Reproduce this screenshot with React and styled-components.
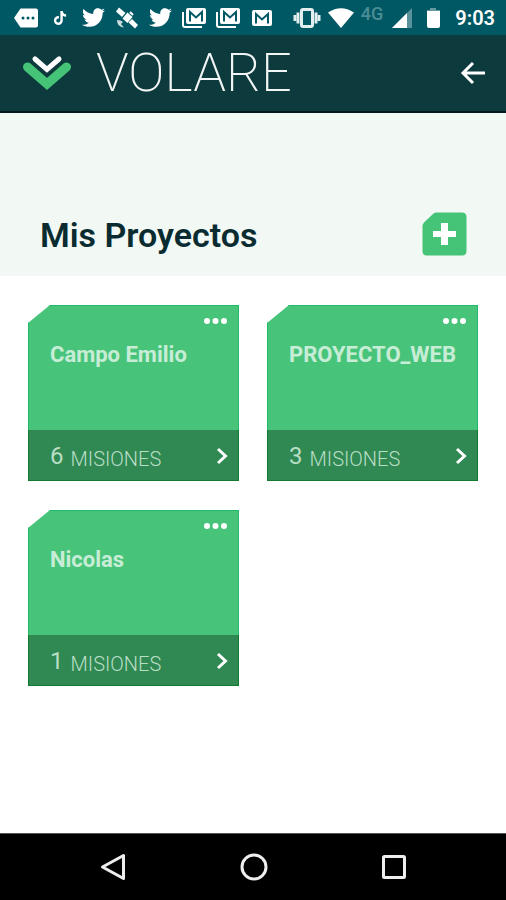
import styled, { createGlobalStyle } from "styled-components";
import { FaTwitter, FaTiktok } from "react-icons/fa";

const GlobalStyle = createGlobalStyle`
  * {
    box-sizing: border-box;
  }
  body {
    margin: 0;
    background: #fff;
    font-family: Roboto, sans-serif;
  }
  h1, h2, p {
    margin: 0;
  }
  button {
    border: none;
    background: none;
    padding: 0;
    cursor: pointer;
  }
  svg {
    display: block;
    flex-shrink: 0;
  }
`;

const StyledPage = styled.div`
  display: flex;
  flex-direction: column;
  min-height: 100vh;
`;

// Status bar
const StyledStatusBar = styled.div`
  display: flex;
  align-items: center;
  height: 35px;
  padding: 0 11px 0 14px;
  background: #005864;
  color: #fff;
`;
const StyledNotifications = styled.div`
  flex: 1;
  display: flex;
  justify-content: space-between;
`;
const StyledSystem = styled.div`
  display: flex;
  align-items: center;
  gap: 7px;
  margin-left: 19px;
`;
const StyledSlot = styled.div`
  display: flex;
  align-items: center;
  justify-content: center;
  width: ${(props) => props.$width || 24}px;
  height: 24px;
`;
const StyledNetwork = styled.span`
  align-self: flex-start;
  color: #4b8d95;
  font-size: 18px;
  font-weight: 500;
  line-height: 16px;
`;
const StyledTime = styled.time`
  margin-left: 3px;
  font-size: 20px;
  font-weight: 600;
  line-height: 24px;
`;
// Status bar end

// Header
const StyledHeader = styled.header`
  display: flex;
  align-items: center;
  height: 78px;
  padding: 0 20px 0 23px;
  border-bottom: 2px solid #021a1b;
  background: #0d3a3c;
`;
const StyledBrand = styled.a`
  display: flex;
  align-items: center;
  gap: 25px;
  color: #f2f5f5;
  text-decoration: none;
`;
const StyledBrandName = styled.span`
  font-size: 54px;
  font-weight: 200;
  line-height: 56px;
`;
const StyledBack = styled.button`
  margin-left: auto;
`;
// Header end

const StyledTitleBand = styled.div`
  display: flex;
  align-items: flex-end;
  justify-content: space-between;
  height: 163px;
  padding: 0 39px 20px 40px;
  background: #f2f8f3;
`;
const StyledTitle = styled.h1`
  color: #0a2c31;
  font-size: 34px;
  font-weight: 600;
  line-height: 42px;
`;

// Project cards
const StyledProjects = styled.main`
  flex: 1;
  display: grid;
  grid-template-columns: 1fr 1fr;
  align-content: start;
  gap: 29px 28px;
  padding: 29px 28px;
`;
const StyledCard = styled.article`
  display: flex;
  flex-direction: column;
  min-height: 176px;
  background: #48c47a;
  clip-path: polygon(22px 0, 100% 0, 100% 100%, 0 100%, 0 18px);
`;
const StyledCardBody = styled.div`
  flex: 1;
  display: flex;
  flex-direction: column;
  padding: 9px 12px 12px 22px;
  box-shadow: inset 1px 1px #1fbb6b, inset -1px 0 #1fbb6b;
`;
const StyledMenu = styled.button`
  align-self: flex-end;
`;
const StyledCardTitle = styled.h2`
  margin-top: 11px;
  color: #c8edd7;
  font-size: 22px;
  font-weight: 700;
  line-height: 32px;
`;
const StyledCardFooter = styled.a`
  display: flex;
  align-items: center;
  justify-content: space-between;
  height: 51px;
  padding: 0 10px 0 22px;
  background: #308852;
  box-shadow: inset 1px -1px #127a2c, inset -1px 0 #127a2c;
  color: #b9dec6;
  text-decoration: none;
`;
const StyledMissions = styled.p`
  display: flex;
  align-items: flex-end;
  gap: 7px;
`;
const StyledCount = styled.span`
  font-size: 24px;
  font-weight: 400;
  line-height: 28px;
`;
const StyledMissionsLabel = styled.span`
  font-size: 20px;
  font-weight: 300;
  line-height: 22px;
`;
// Project cards end

const StyledNavBar = styled.nav`
  display: flex;
  align-items: center;
  justify-content: space-between;
  height: 67px;
  padding: 0 98px 0 99px;
  border-top: 1px solid #555;
  background: #000;
`;

const projects = [
  { name: "Campo Emilio", missions: 6 },
  { name: "PROYECTO_WEB", missions: 3 },
  { name: "Nicolas", missions: 1 },
];

const TagIcon = () => (
  <svg width="24" height="20" viewBox="0 0 24 20">
    <path d="M6.500 0.500H22q2 0 2 2v15q0 2-2 2H6.500L0 10z" fill="#fff" />
    <circle cx="9" cy="10" r="1.500" fill="#005864" />
    <circle cx="14" cy="10" r="1.500" fill="#005864" />
    <circle cx="19" cy="10" r="1.500" fill="#005864" />
  </svg>
);

const SatelliteIcon = () => (
  <svg width="24" height="22" viewBox="0 0 24 22" fill="#fff">
    <path d="M4 0.500 10.500 6 7 10 1 4.500z" />
    <path d="M17 12 23 18 20 21.500 13.500 15.500z" />
    <path d="M12.500 5.500 17.500 10 12.500 16 7.500 11.500z" />
    <path d="M15 5 18 8" stroke="#fff" strokeWidth="2" />
    <path d="M2 13q0 7 7 7.500L6 17l2-2-2.500-1.500z" opacity="0.8" />
  </svg>
);

const MailIcon = ({ stacked }) => (
  <svg width="26" height="22" viewBox="0 0 26 22" fill="none">
    {stacked && (
      <path d="M2 5v13q0 2 2 2h17" stroke="#fff" strokeWidth="2" />
    )}
    <g transform={stacked ? "translate(4 0)" : "translate(2 2)"}>
      <rect x="1" y="1" width="20" height="16" rx="2" fill="#fff" />
      <path d="M5 14.500V5l6 5.500L17 5v9.500" stroke="#005864" strokeWidth="2" />
    </g>
  </svg>
);

const VibrateIcon = () => (
  <svg width="28" height="22" viewBox="0 0 28 22" fill="none" stroke="#e3eeef">
    <rect x="8.500" y="2.500" width="11" height="17" rx="1.500" strokeWidth="3" />
    <path d="M5 5.500v11M23 5.500v11" strokeWidth="3" />
    <path d="M2 8v6M26 8v6" strokeWidth="3" />
  </svg>
);

const WifiIcon = () => (
  <svg width="26" height="20" viewBox="0 0 26 20">
    <path d="M13 20 0 4.500Q13-4 26 4.500z" fill="#fff" />
  </svg>
);

const SignalIcon = () => (
  <svg width="24" height="20" viewBox="0 0 24 20">
    <path d="M22 0v20H2z" fill="#fff" opacity="0.35" />
    <path d="M17 5v15H2z" fill="#fff" />
  </svg>
);

const BatteryIcon = () => (
  <svg width="16" height="22" viewBox="0 0 16 22" fill="#fff">
    <path d="M5 1h6v2h4v3H2V3h3z" opacity="0.4" />
    <path d="M2 4h13v15q0 2-2 2H4q-2 0-2-2z" />
  </svg>
);

const VolareLogo = () => (
  <svg width="48" height="36" viewBox="0 0 48 36" fill="none">
    <path
      d="M4.500 12 24 29 43.500 12"
      stroke="#45c477"
      strokeWidth="9"
      strokeLinecap="round"
    />
    <path
      d="M12 4 24 14.500 36 4"
      stroke="#fff"
      strokeWidth="5"
      strokeLinecap="round"
    />
  </svg>
);

const ProjectCard = ({ name, missions }) => (
  <StyledCard>
    <StyledCardBody>
      <StyledMenu aria-label={`Opciones de ${name}`}>
        <svg width="24" height="14" viewBox="0 0 24 14" fill="#fff">
          <circle cx="4" cy="7" r="3" />
          <circle cx="12.500" cy="7" r="3" />
          <circle cx="21" cy="7" r="3" />
        </svg>
      </StyledMenu>
      <StyledCardTitle>{name}</StyledCardTitle>
    </StyledCardBody>
    <StyledCardFooter href="#">
      <StyledMissions>
        <StyledCount>{missions}</StyledCount>
        <StyledMissionsLabel>MISIONES</StyledMissionsLabel>
      </StyledMissions>
      <svg width="14" height="18" viewBox="0 0 14 18" fill="none">
        <path d="M3 2 10.500 9 3 16" stroke="#fff" strokeWidth="3" />
      </svg>
    </StyledCardFooter>
  </StyledCard>
);

export default function App() {
  return (
    <>
      <GlobalStyle />
      <StyledPage>
        <StyledStatusBar>
          <StyledNotifications>
            <StyledSlot><TagIcon /></StyledSlot>
            <StyledSlot><FaTiktok size={14} /></StyledSlot>
            <StyledSlot><FaTwitter size={23} /></StyledSlot>
            <StyledSlot><SatelliteIcon /></StyledSlot>
            <StyledSlot><FaTwitter size={23} /></StyledSlot>
            <StyledSlot><MailIcon stacked /></StyledSlot>
            <StyledSlot><MailIcon stacked /></StyledSlot>
            <StyledSlot><MailIcon /></StyledSlot>
          </StyledNotifications>
          <StyledSystem>
            <StyledSlot $width={28}><VibrateIcon /></StyledSlot>
            <StyledSlot $width={26}><WifiIcon /></StyledSlot>
            <StyledNetwork>4G</StyledNetwork>
            <StyledSlot><SignalIcon /></StyledSlot>
            <StyledSlot><BatteryIcon /></StyledSlot>
            <StyledTime>9:03</StyledTime>
          </StyledSystem>
        </StyledStatusBar>

        <StyledHeader>
          <StyledBrand href="#">
            <VolareLogo />
            <StyledBrandName>VOLARE</StyledBrandName>
          </StyledBrand>
          <StyledBack aria-label="Volver">
            <svg width="26" height="24" viewBox="0 0 26 24" fill="none">
              <path
                d="M13 2 3 12 13 22M4 12H25"
                stroke="#fff"
                strokeWidth="3"
              />
            </svg>
          </StyledBack>
        </StyledHeader>

        <StyledTitleBand>
          <StyledTitle>Mis Proyectos</StyledTitle>
          <button aria-label="Agregar proyecto">
            <svg width="45" height="44" viewBox="0 0 45 44">
              <path
                d="M14 0.500H40Q44.500 0.500 44.500 5V39Q44.500 43.500 40 43.500H5Q0.500 43.500 0.500 39V14Q0.500 12 2 10.500L11 2Q12.500 0.500 14 0.500z"
                fill="#45c477"
              />
              <path d="M19 11h7v8h8v6h-8v8h-7v-8h-8v-6h8z" fill="#fff" />
            </svg>
          </button>
        </StyledTitleBand>

        <StyledProjects>
          {projects.map((project) => (
            <ProjectCard key={project.name} {...project} />
          ))}
        </StyledProjects>

        <StyledNavBar>
          <button aria-label="Atrás">
            <svg width="28" height="28" viewBox="0 0 28 28" fill="none">
              <path
                d="M24.500 2.500V25.500L3.500 14z"
                stroke="#eee"
                strokeWidth="3"
                strokeLinejoin="round"
              />
            </svg>
          </button>
          <button aria-label="Inicio">
            <svg width="28" height="28" viewBox="0 0 28 28" fill="none">
              <circle cx="14" cy="14" r="12" stroke="#eee" strokeWidth="3" />
            </svg>
          </button>
          <button aria-label="Recientes">
            <svg width="28" height="28" viewBox="0 0 28 28" fill="none">
              <rect
                x="3.500"
                y="3.500"
                width="21"
                height="21"
                rx="1"
                stroke="#eee"
                strokeWidth="3"
              />
            </svg>
          </button>
        </StyledNavBar>
      </StyledPage>
    </>
  );
}
